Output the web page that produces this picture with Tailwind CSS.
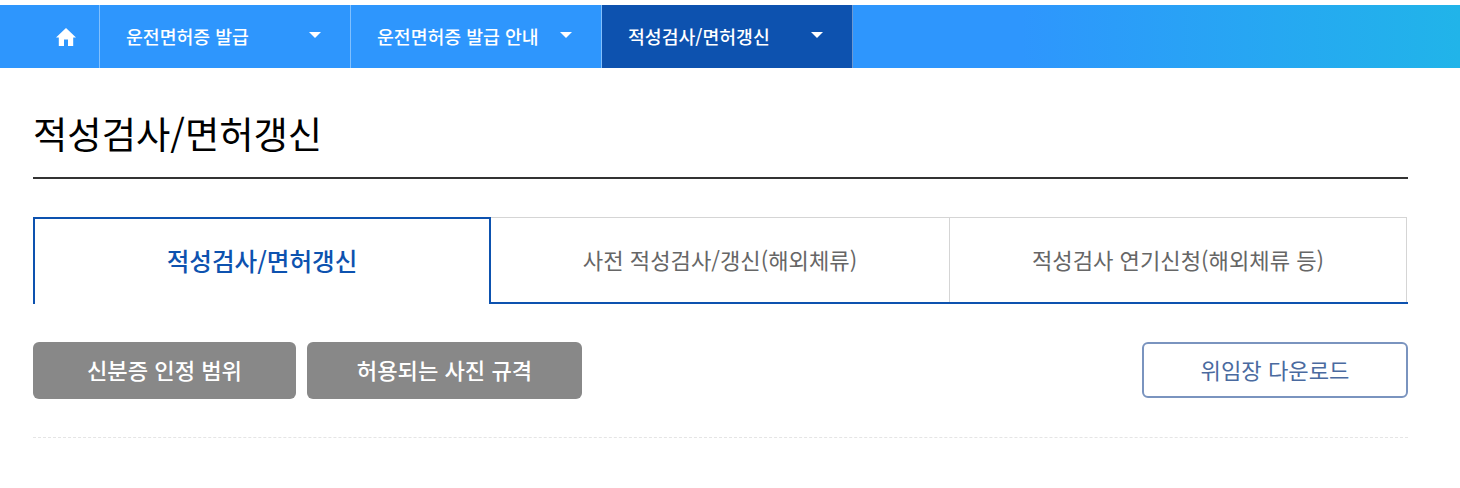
<!DOCTYPE html>
<html lang="ko">
<head>
<meta charset="utf-8">
<script src="https://cdn.jsdelivr.net/npm/@tailwindcss/browser@4"></script>
</head>
<body class="bg-white font-['Noto_Sans_CJK_KR','Noto_Sans',sans-serif]">
<div class="pt-[5px] h-[488px] overflow-hidden">
  <nav class="flex h-[63px] bg-gradient-to-r from-[#2e96fd] from-70% to-[#21b4e9] text-white">
    <a class="flex w-[100px] items-center justify-center pl-[33px] border-r border-white/40">
      <svg class="w-[24px] h-[24px]" viewBox="0 0 24 24" fill="#fff"><path d="M10 21v-6.500h4v6.500h5.200v-8.500H22L12 3 2 12.500h2.800v8.500z"/></svg>
    </a>
    <a class="flex w-[251px] items-center justify-between pl-[26px] pr-[28px] border-r border-white/40 text-[18.3px] font-medium"><span>운전면허증 발급</span><i class="w-0 h-0 border-x-[6.500px] border-x-transparent border-t-[6px] border-t-white -mt-[3px] mr-[1px]"></i></a>
    <a class="flex w-[251px] items-center justify-between pl-[26px] pr-[28px] border-r border-white/40 text-[18.3px] font-medium"><span>운전면허증 발급 안내</span><i class="w-0 h-0 border-x-[6.500px] border-x-transparent border-t-[6px] border-t-white -mt-[3px] mr-[1px]"></i></a>
    <a class="flex w-[251px] items-center justify-between pl-[26px] pr-[28px] border-r border-white/40 bg-[#0d52af] text-[18.3px] font-medium"><span>적성검사/면허갱신</span><i class="w-0 h-0 border-x-[6.500px] border-x-transparent border-t-[6px] border-t-white -mt-[3px] mr-[1px]"></i></a>
  </nav>
  <main class="ml-[33px] w-[1375px]">
    <h1 class="h-[111px] border-b-2 border-[#333] pt-[37px] text-[37.3px] leading-[56px] text-black font-normal">적성검사/면허갱신</h1>
    <div class="flex mt-[38px] h-[87px] border-b-2 border-[#0d52af] text-[22.15px]">
      <div class="flex w-[458px] h-[87px] pb-[3px] items-center justify-center border-2 border-b-0 border-[#0d52af] bg-white text-[#0d52af] text-[24.6px] font-medium">적성검사/면허갱신</div>
      <div class="flex w-[458px] h-[85px] items-center justify-center border-t border-[#d5d5d5] text-[#666]">사전 적성검사/갱신(해외체류)</div>
      <div class="flex w-[458px] h-[85px] items-center justify-center border-t border-x border-[#d5d5d5] text-[#666]">적성검사 연기신청(해외체류 등)</div>
    </div>
    <div class="flex mt-[38px] gap-[11px] text-[22.15px]">
      <a class="flex w-[263px] h-[57px] pb-[1px] items-center justify-center rounded-md bg-[#888] text-white font-medium">신분증 인정 범위</a>
      <a class="flex w-[275px] h-[57px] pb-[1px] items-center justify-center rounded-md bg-[#888] text-white font-medium">허용되는 사진 규격</a>
      <a class="flex ml-auto w-[266px] h-[56px] pb-[1px] items-center justify-center rounded-md border-2 border-[#7a94bf] text-[#4a6a9f]">위임장 다운로드</a>
    </div>
    <div class="mt-[38px] border-t border-dashed border-[#e5e5e5]"></div>
  </main>
</div>
</body>
</html>
